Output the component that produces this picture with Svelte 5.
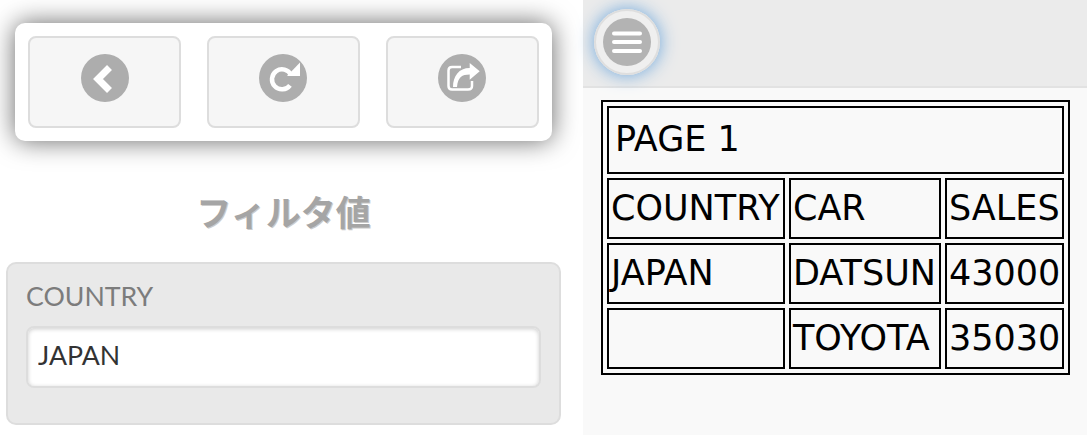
<script>
	const rows = [
		['COUNTRY', 'CAR', 'SALES'],
		['JAPAN', 'DATSUN', '43000'],
		['', 'TOYOTA', '35030']
	];
</script>

<div class="page">
	<aside class="panel">
		<div class="toolbar">
			<button class="tool" aria-label="Back">
				<svg viewBox="0 0 48 48" width="48" height="48">
					<circle cx="24" cy="24" r="24" fill="#adadad" />
					<path d="M28.5 13.5 L17 25 L28.5 36.5" fill="none" stroke="#fff" stroke-width="7" />
				</svg>
			</button>
			<button class="tool nudge" aria-label="Reload">
				<svg viewBox="0 0 48 48" width="48" height="48">
					<circle cx="24" cy="24" r="24" fill="#adadad" />
					<path d="M31 31.3 A10 10 0 1 1 32 21" fill="none" stroke="#fff" stroke-width="4.5" />
					<path d="M41 8.5 V22 H28 Z" fill="#fff" />
				</svg>
			</button>
			<button class="tool nudge" aria-label="Share">
				<svg viewBox="0 0 48 48" width="48" height="48">
					<circle cx="24" cy="24" r="24" fill="#adadad" />
					<path d="M23 13 H14 Q10.5 13 10.5 16.5 V32 Q10.5 35.5 14 35.5 H30 Q34 35.5 34 32 V27" fill="none" stroke="#fff" stroke-width="2.5" />
					<path d="M15 33 C15 22 21 14 31.7 14 V9 L41.7 17.3 L31.7 25.7 V20.5 C24 20.5 20 23 19 33 Z" fill="#fff" />
				</svg>
			</button>
		</div>

		<h2 class="title">フィルタ値</h2>

		<div class="filter">
			<label class="filter-label" for="country">COUNTRY</label>
			<input id="country" class="filter-input" value="JAPAN" />
		</div>
	</aside>

	<main class="content">
		<header class="topbar">
			<button class="menu" aria-label="Menu">
				<svg viewBox="0 0 48 48" width="48" height="48">
					<circle cx="24" cy="24" r="24" fill="#b3b3b3" />
					<path d="M11 15.5 H37 M11 24 H37 M11 33 H37" stroke="#fff" stroke-width="4" stroke-linecap="round" />
				</svg>
			</button>
		</header>

		<table class="report">
			<colgroup>
				<col class="col-country" />
				<col class="col-car" />
				<col class="col-sales" />
			</colgroup>
			<tbody>
				<tr><td class="page-cell" colspan="3">PAGE 1</td></tr>
				{#each rows as row}
					<tr>
						{#each row as cell}
							<td>{cell}</td>
						{/each}
					</tr>
				{/each}
			</tbody>
		</table>
	</main>
</div>

<style>
	:global(body) {
		background: #fff;
	}

	.page {
		display: flex;
		height: 435px;
		overflow: hidden;
	}

	.panel {
		box-sizing: border-box;
		flex: 0 0 582.67px;
		padding: 23px 21.67px 0 6px;
		font-family: Lato, sans-serif;
	}

	.toolbar {
		display: flex;
		gap: 26px;
		margin: 0 9px;
		padding: 13px;
		border-radius: 10px;
		background: #fff;
		box-shadow: 0 0 26px rgba(0, 0, 0, 0.6);
	}

	.tool {
		display: flex;
		flex: 1;
		align-items: center;
		justify-content: center;
		height: 92px;
		padding: 0 0 8px;
		border: 2px solid #ddd;
		border-radius: 8px;
		background: #f6f6f6;
	}

	.nudge svg {
		margin-left: -1px;
	}

	.title {
		margin: 48px 0 29px;
		color: #a5a5a5;
		font-family: 'Noto Sans CJK JP', sans-serif;
		font-size: 35px;
		font-weight: 700;
		line-height: 44px;
		text-align: center;
		text-shadow: 1px 1px 0 #ccc;
	}

	.filter {
		padding: 16px 18px 35px;
		border: 2px solid #ddd;
		border-radius: 10px;
		background: #e9e9e9;
	}

	.filter-label {
		display: block;
		margin-bottom: 14px;
		color: #7c7c7c;
		font-size: 26.7px;
		line-height: 32px;
	}

	.filter-input {
		display: block;
		box-sizing: border-box;
		width: 100%;
		height: 62px;
		padding: 0 10px 4px;
		border: 2px solid #ddd;
		border-radius: 8px;
		outline: none;
		background: #fff;
		box-shadow: inset 0 1px 4px rgba(0, 0, 0, 0.2);
		color: #333;
		font-family: Lato, sans-serif;
		font-size: 26.7px;
	}

	.content {
		position: relative;
		flex: 1;
		background: #f9f9f9;
	}

	.topbar {
		box-sizing: border-box;
		height: 88px;
		padding: 9px 11.33px;
		border-bottom: 2px solid #e2e2e2;
		background: #ebebeb;
	}

	.menu {
		display: flex;
		align-items: center;
		justify-content: center;
		box-sizing: border-box;
		width: 66px;
		height: 66px;
		padding: 0;
		border: 0;
		border-radius: 50%;
		background: #efefef;
		box-shadow: 0 0 0 2px #dedede inset, 0 0 18px #6aa5dc;
	}

	.report {
		table-layout: fixed;
		width: 469px;
		margin: 12px 0 0 18.33px;
		border: 2px solid #000;
		border-spacing: 4px;
		color: #000;
		font-family: 'DejaVu Sans', sans-serif;
		font-size: 35px;
		line-height: 40px;
	}

	.col-country {
		width: 178px;
	}

	.col-car {
		width: 152px;
	}

	.col-sales {
		width: 119px;
	}

	.report td {
		height: 55px;
		padding: 0 2px 2px;
		border: 2px solid #000;
		white-space: nowrap;
	}

	.report .page-cell {
		height: 62px;
		padding: 0 6px 2px;
	}
</style>
